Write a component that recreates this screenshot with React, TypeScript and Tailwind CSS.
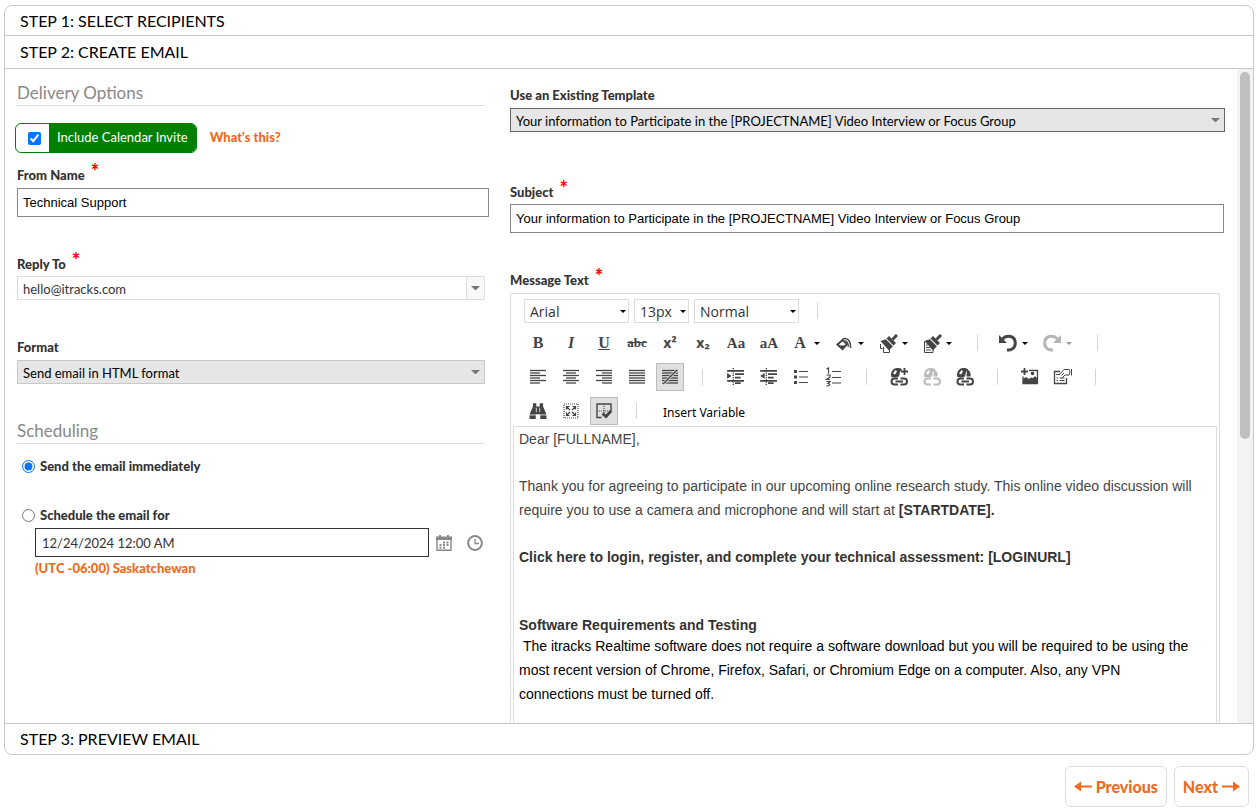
import { useState } from 'react';
import type { ReactNode } from 'react';

const LATO = 'font-[Lato,sans-serif]';
const ARIAL = "font-['Liberation_Sans',Arial,sans-serif]";
const SERIF = "font-['Liberation_Serif',serif]";

const SUBJECT = 'Your information to Participate in the [PROJECTNAME] Video Interview or Focus Group';

function Required() {
  return <span className="relative -top-1 ml-1.5 text-xl leading-none font-black text-[#ff0000]">*</span>;
}

function FieldLabel({ htmlFor, required, children }: { htmlFor: string; required?: boolean; children: ReactNode }) {
  return (
    <label htmlFor={htmlFor} className="flex h-5 items-center text-[13px] leading-5 font-black text-[#333]">
      {children}
      {required && <Required />}
    </label>
  );
}

function Caret({ className = '' }: { className?: string }) {
  return (
    <svg viewBox="0 0 10 5" className={className} aria-hidden="true">
      <path d="M0 0h10L5 5z" fill="currentColor" />
    </svg>
  );
}

// Grey drop-down used by the template, reply-to and format fields
function SelectBox({ id, value, tone }: { id: string; value: string; tone: 'plain' | 'grey' | 'dark' }) {
  const tones = {
    plain: 'border-[#ddd] bg-white text-[#333]',
    grey: 'border-[#c9c9c9] bg-[#e6e6e6] text-black',
    dark: 'border-[#666] bg-[#e6e6e6] text-black',
  };
  return (
    <div className="relative">
      <select id={id} className={`block h-6 w-full appearance-none rounded-none border px-[5px] pt-px text-[13px] leading-5 outline-none ${tones[tone]}`}>
        <option>{value}</option>
      </select>
      <span
        className={`pointer-events-none absolute inset-y-px right-px flex w-[18px] items-center justify-center ${
          tone === 'plain' ? 'border-l border-[#ddd] bg-[#f8f8f8]' : ''
        }`}
      >
        <Caret className="w-[9px] text-[#777]" />
      </span>
    </div>
  );
}

function ToolSelect({ label, value, className }: { label: string; value: string; className: string }) {
  return (
    <div className={`relative ${className}`}>
      <select
        aria-label={label}
        className="block h-6 w-full appearance-none border border-[#ddd] bg-white px-[5px] pt-px font-['Open_Sans',sans-serif] text-sm leading-5 text-[#333] outline-none"
      >
        <option>{value}</option>
      </select>
      <Caret className="pointer-events-none absolute top-[11px] right-[3px] w-[6px] text-black" />
    </div>
  );
}

function Tool({ label, active, children }: { label: string; active?: boolean; children: ReactNode }) {
  return (
    <button
      type="button"
      title={label}
      aria-label={label}
      className={`flex size-7 shrink-0 items-center justify-center text-[#444] ${
        active ? 'border border-[#bbb] bg-[#e0e0e0]' : ''
      }`}
    >
      {children}
    </button>
  );
}

function SplitTool({ label, disabled, children }: { label: string; disabled?: boolean; children: ReactNode }) {
  return (
    <button
      type="button"
      title={label}
      aria-label={label}
      disabled={disabled}
      className={`flex h-7 w-[39px] shrink-0 items-center ${disabled ? 'text-[#b5b5b5]' : 'text-[#444]'}`}
    >
      <span className="flex w-6 items-center justify-center">{children}</span>
      <Caret className={`ml-[2px] w-[6px] ${disabled ? 'text-[#999]' : 'text-black'}`} />
    </button>
  );
}

function Divider() {
  return (
    <span className="flex w-[27px] shrink-0 justify-center">
      <span className="h-4 w-px bg-[#d5d5d5]" />
    </span>
  );
}

function Icon({ size = 'size-4', children }: { size?: string; children: ReactNode }) {
  return (
    <svg viewBox="0 0 16 16" className={size} fill="none" stroke="currentColor" strokeWidth="1.2" aria-hidden="true">
      {children}
    </svg>
  );
}

const ROWS = [1.5, 4, 6.5, 9, 11.5, 14];

function AlignIcon({ align }: { align: 'left' | 'center' | 'right' | 'full' | 'none' }) {
  return (
    <Icon>
      {ROWS.map((y, i) => {
        const short = i % 2 === 1 && align !== 'full' && align !== 'none';
        const start = !short || align === 'left' ? 0 : align === 'center' ? 3 : 6;
        return <path key={y} d={`M${start} ${y}h${short ? 10 : 16}`} strokeWidth="1.3" />;
      })}
      {align === 'none' && (
        <>
          <path d="M1 15 15 1" stroke="#e0e0e0" strokeWidth="3" />
          <path d="M1 15 15 1" strokeWidth="1.4" />
        </>
      )}
    </Icon>
  );
}

function IndentIcon({ outdent }: { outdent?: boolean }) {
  return (
    <Icon size="size-[18px]">
      <path d="M1 2.500h15M8 5.500h8M8 8.500h5M1 11.500h15M8 13.500h5" strokeWidth="1.500" />
      <path d="M6.500 0v16" strokeDasharray="1 1" />
      <path d={outdent ? 'M5 4.500v5L1 7z' : 'M1 4.500v5L5 7z'} fill="currentColor" stroke="none" />
    </Icon>
  );
}

function LinkIcon({ plus, broken }: { plus?: boolean; broken?: boolean }) {
  return (
    <svg viewBox="0 0 18 18" className="size-[18px]" fill="none" stroke="currentColor" aria-hidden="true">
      <path d="M1.500 9a6.500 6.500 0 0 1 6.500-9c2 0 3 .5 4 1.500L10 4l-1 4.500-4 1z" fill="currentColor" stroke="none" />
      <path d="M3 5.500 5.500 2l1.500 1.500-2 3z" fill="#fff" stroke="none" />
      {plus ? (
        <path d="M14.500 0v7M11 3.500h7" strokeWidth="1.800" />
      ) : (
        <path d="M11 1.500c3 1 4 4 3.500 7L10.500 8.500z" fill="currentColor" stroke="none" />
      )}
      <path d="M8 10.500H4.500a3 3 0 0 0 0 6H8M10.500 10.500H14a3 3 0 0 1 0 6h-3.500" strokeWidth="2" />
      {!broken && <path d="M5.500 13.500h7.500" strokeWidth="2" />}
    </svg>
  );
}

function BrushIcon({ page }: { page?: boolean }) {
  return (
    <svg viewBox="0 0 19 19" className="size-[19px] shrink-0" fill="none" stroke="currentColor" aria-hidden="true">
      {page ? (
        <path d="M3 7.500H1.500v11h8.500V15M3 11h2M3 13.500h4M3 16h5" />
      ) : (
        <path d="M1.500 10v4.500h2M4.500 13v5.500h6V15" />
      )}
      <path d="M18 1 13.500 5.500" strokeWidth="3" />
      <path d="M10 2 17 9l-2.500 2.500-7-7z" fill="currentColor" stroke="none" />
      <path d="M6.800 5.200 13.800 12.200 10 16.500 1.500 7z" fill="currentColor" stroke="none" />
    </svg>
  );
}

function UndoIcon({ redo }: { redo?: boolean }) {
  return (
    <svg viewBox="0 0 18 18" className="size-[18px] shrink-0" fill="none" stroke="currentColor" aria-hidden="true">
      <g transform={redo ? 'matrix(-1 0 0 1 18 0)' : undefined}>
        <path d="M3.500 5C8 0 16.300 2 16.300 9c0 5-4 7.800-8.300 6.700" strokeWidth="3" />
        <path d="M0 1v8h8z" fill="currentColor" stroke="none" />
      </g>
    </svg>
  );
}

function Toolbar() {
  return (
    <div className="flex flex-col gap-[6px] px-[13px] pt-[5px]">
      <div className="flex h-6 items-center gap-[5px]">
        <ToolSelect label="Font family" value="Arial" className="w-[105px]" />
        <ToolSelect label="Font size" value="13px" className="w-[55px]" />
        <ToolSelect label="Paragraph style" value="Normal" className="w-[105px]" />
        <Divider />
      </div>

      <div className="flex h-7 items-center gap-[5px]">
        <Tool label="Bold"><span className={`${SERIF} text-base font-bold`}>B</span></Tool>
        <Tool label="Italic"><span className={`${SERIF} text-base font-bold italic`}>I</span></Tool>
        <Tool label="Underline"><span className={`${SERIF} text-base font-bold underline`}>U</span></Tool>
        <Tool label="Strikethrough"><span className={`${SERIF} text-[13px] font-bold line-through`}>abc</span></Tool>
        <Tool label="Superscript">
          <span className="font-['Open_Sans',sans-serif] text-sm font-bold">x²</span>
        </Tool>
        <Tool label="Subscript">
          <span className="font-['Open_Sans',sans-serif] text-sm font-bold">x₂</span>
        </Tool>
        <Tool label="Capitalize"><span className={`${SERIF} text-[15px] font-bold`}>Aa</span></Tool>
        <Tool label="Uppercase"><span className={`${SERIF} text-[15px] font-bold`}>aA</span></Tool>
        <SplitTool label="Font color"><span className={`${SERIF} text-base font-bold`}>A</span></SplitTool>
        <SplitTool label="Background color">
          <Icon>
            <path d="M1.500 9.500 6.500 5l4.500 4-4.500 5z" fill="#fff" strokeWidth="2" />
            <path d="M3 10.500h7L6.500 14z" fill="currentColor" stroke="none" />
            <path d="M6.500 4C11 2.500 15 5 14.500 13" strokeWidth="1.500" />
            <path d="M9 5.500c2.500 1 3.500 3 3.200 6.500" />
          </Icon>
        </SplitTool>
        <SplitTool label="Format painter"><BrushIcon /></SplitTool>
        <SplitTool label="Format stripper"><BrushIcon page /></SplitTool>
        <Divider />
        <SplitTool label="Undo"><UndoIcon /></SplitTool>
        <SplitTool label="Redo" disabled><UndoIcon redo /></SplitTool>
        <Divider />
      </div>

      <div className="flex h-7 items-center gap-[5px]">
        <Tool label="Align left"><AlignIcon align="left" /></Tool>
        <Tool label="Align center"><AlignIcon align="center" /></Tool>
        <Tool label="Align right"><AlignIcon align="right" /></Tool>
        <Tool label="Justify"><AlignIcon align="full" /></Tool>
        <Tool label="Remove alignment" active><AlignIcon align="none" /></Tool>
        <Divider />
        <Tool label="Indent"><IndentIcon /></Tool>
        <Tool label="Outdent"><IndentIcon outdent /></Tool>
        <Tool label="Bullet list">
          <Icon>
            <path d="M6 2.500h9M6 8h9M6 13.500h9" />
            <path d="M1 2.500h3M1 8h3M1 13.500h3" strokeWidth="3" />
          </Icon>
        </Tool>
        <Tool label="Numbered list">
          <svg viewBox="0 0 18 20" className="h-5 w-[18px]" fill="none" stroke="currentColor" aria-hidden="true">
            <path d="M7 4.500h9M7 10.500h9M7 16h9" strokeWidth="1.200" />
            <path d="M1.500 2 3.500 1v5.500M1.500 8H5v2L1.500 12.500H5M1.500 14.500H5L3 16.500c3 0 2 2.500-1.500 2.500" strokeWidth="1.200" />
          </svg>
        </Tool>
        <Divider />
        <Tool label="Insert link"><LinkIcon plus /></Tool>
        <Tool label="Remove link"><span className="text-[#bbb]"><LinkIcon broken /></span></Tool>
        <Tool label="Link manager"><LinkIcon /></Tool>
        <Divider />
        <Tool label="Insert image">
          <svg viewBox="0 0 18 18" className="size-[18px]" fill="none" stroke="currentColor" aria-hidden="true">
            <path d="M3.500 0v7M0 3.500h7" strokeWidth="1.800" />
            <path d="M8 2.500h8.500v13H2V8.500" strokeWidth="1.300" />
            <circle cx="11.500" cy="5.500" r="1.800" fill="currentColor" stroke="none" />
            <path d="M2 16v-5l3-2 3 2 2-1.500 2 .5 2-2 2.500 2.500V16z" fill="currentColor" stroke="none" />
          </svg>
        </Tool>
        <Tool label="Properties">
          <svg viewBox="0 0 20 18" className="h-[18px] w-5" fill="none" stroke="currentColor" aria-hidden="true">
            <path d="M7 3.500H1.500v12h12V10" strokeWidth="1.300" />
            <path d="M3 6.500h4M3.500 10h1.500M3.500 12.500h1.500M6.500 10h5M6.500 12.500h5" strokeWidth="1.200" />
            <path d="M6 6.500 9 4l2-2.500h5l1 2-1 3.500h-4l-3 3M8.500 7.500 11 5M18.500 1v6.500" />
          </svg>
        </Tool>
        <Divider />
      </div>

      <div className="flex h-7 items-center gap-[5px]">
        <Tool label="Find and replace">
          <Icon size="size-[18px]">
            <path d="M3.500 1h3v3h3V1h3v3l3 7v4h-5.500v-4H6v4H.5v-4l3-7z" fill="currentColor" stroke="none" />
            <path d="M0 11.500h16" stroke="#fff" strokeWidth=".7" />
            <path d="M6.500 5v4M9.500 5v4" stroke="#fff" strokeWidth=".7" />
          </Icon>
        </Tool>
        <Tool label="Full screen">
          <Icon>
            <path d="M1 1h14v14H1z" strokeDasharray="1 1" />
            <path d="M3.500 6.500v-3h3M9.500 3.500h3v3M12.500 9.500v3h-3M6.500 12.500h-3v-3M4 4l3 3M12 4 9 7M12 12 9 9M4 12l3-3" />
          </Icon>
        </Tool>
        <Tool label="Show borders" active>
          <Icon>
            <path d="M5.500 14.500H1V1h14v8" strokeWidth="1.400" />
            <path d="M8 1v12M1 8h14" strokeDasharray="1 1" />
            <path d="m6.500 10.500 3.500 3 5-5.500" strokeWidth="2.800" />
          </Icon>
        </Tool>
        <Divider />
        <button type="button" className="ml-2 pt-1 font-['Noto_Sans',sans-serif] text-xs text-black">
          Insert Variable
        </button>
      </div>
    </div>
  );
}

function MessageBody() {
  return (
    <div className={`mx-[2px] mt-px grow border border-b-0 border-[#ddd] pr-5 pl-[5px] text-sm leading-6 text-[#444] ${ARIAL}`}>
      <p>Dear [FULLNAME],</p>
      <p className="mt-[23px]">
        Thank you for agreeing to participate in our upcoming online research study. This online video discussion will
        require you to use a camera and microphone and will start at <b className="text-[#333]">[STARTDATE].</b>
      </p>
      <p className="mt-[23px] font-bold text-[#333]">
        Click here to login, register, and complete your technical assessment: [LOGINURL]
      </p>
      <p className="mt-[46px] leading-5 font-bold text-[#333]">Software Requirements and Testing</p>
      <p className="-mt-px text-black">
        &nbsp;The itracks Realtime software does not require a software download but you will be required to be using
        the most recent version of Chrome, Firefox, Safari, or Chromium Edge on a computer. Also, any VPN connections
        must be turned off.
      </p>
    </div>
  );
}

function DeliveryColumn() {
  const [invite, setInvite] = useState(true);
  const [when, setWhen] = useState('now');

  return (
    <div>
      <h2 className="mt-3 border-b border-[#ddd] text-[17px] leading-6 text-[#888]">Delivery Options</h2>

      <div className="mt-[17px] -ml-[2px] flex items-center gap-[13px]">
        <label className="flex h-[30px] items-stretch overflow-hidden rounded-md border border-[#008000] text-[13px] text-white">
          <span className="flex w-[33px] items-center justify-center pl-[3px]">
            <input
              type="checkbox"
              checked={invite}
              onChange={(e) => setInvite(e.target.checked)}
              className="size-[13px]"
            />
          </span>
          <span className="flex items-center bg-[#008000] px-2">Include Calendar Invite</span>
        </label>
        <a href="#whats-this" className="text-[13px] font-black text-[#f26a21]">What's this?</a>
      </div>

      <div className="mt-3">
        <FieldLabel htmlFor="fromName" required>From Name</FieldLabel>
        <div className="mt-[3px] -mr-1">
          <input
            id="fromName"
            type="text"
            defaultValue="Technical Support"
            className={`block h-[29px] w-full border border-[#888] px-[5px] text-[13px] text-black outline-none ${ARIAL}`}
          />
        </div>
      </div>

      <div className="mt-[37px]">
        <FieldLabel htmlFor="replyTo" required>Reply To</FieldLabel>
        <div className="mt-[2px]"><SelectBox id="replyTo" value="hello@itracks.com" tone="plain" /></div>
      </div>

      <div className="mt-[37px]">
        <FieldLabel htmlFor="format">Format</FieldLabel>
        <div className="mt-[3px]"><SelectBox id="format" value="Send email in HTML format" tone="grey" /></div>
      </div>

      <h2 className="mt-[35px] border-b border-[#ddd] text-[17px] leading-6 text-[#888]">Scheduling</h2>

      <label className="mt-3 flex items-center gap-[5px] pl-[5px] text-[13px] leading-5 font-black text-[#333]">
        <input type="radio" name="when" checked={when === 'now'} onChange={() => setWhen('now')} className="size-[13px]" />
        Send the email immediately
      </label>
      <label className="mt-[29px] flex items-center gap-[5px] pl-[5px] text-[13px] leading-5 font-black text-[#333]">
        <input type="radio" name="when" checked={when === 'later'} onChange={() => setWhen('later')} className="size-[13px]" />
        Schedule the email for
      </label>

      <div className="mt-[3px] mr-[2px] ml-[18px] flex items-center">
        <input
          type="text"
          aria-label="Schedule date"
          defaultValue="12/24/2024 12:00 AM"
          className="h-[29px] min-w-0 grow border border-[#333] px-[6px] text-[13px] text-[#333] outline-none"
        />
        <button type="button" aria-label="Open calendar" className="ml-[7px] text-[#888]">
          <Icon>
            <path d="M1 3h14v12.300H1z" strokeWidth="1.400" />
            <path d="M4 0v3M12 0v3" strokeWidth="1.800" />
            <path d="M0 1.500h16v3.500H0z" fill="currentColor" stroke="none" />
            <path d="M7 7.500h2M10.500 7.500h2M3.500 10h2M7 10h2M10.500 10h2M3.500 12.700h2M7 12.700h2" strokeWidth="1.900" />
          </Icon>
        </button>
        <button type="button" aria-label="Open time picker" className="ml-[15px] text-[#888]">
          <Icon>
            <circle cx="8" cy="8" r="6.900" strokeWidth="2" />
            <path d="M8 4v4.500h4" strokeWidth="1.300" />
          </Icon>
        </button>
      </div>
      <p className="mt-px ml-[18px] text-[13px] leading-5 font-black text-[#f26a21]">(UTC -06:00) Saskatchewan</p>
    </div>
  );
}

function MessageColumn() {
  return (
    <div className="flex min-w-0 flex-col">
      <div className="mt-4">
        <FieldLabel htmlFor="template">Use an Existing Template</FieldLabel>
        <div className="mt-[3px]"><SelectBox id="template" value={SUBJECT} tone="dark" /></div>
      </div>

      <div className="mt-[50px]">
        <FieldLabel htmlFor="subject" required>Subject</FieldLabel>
        <div className="mt-[2px] mr-px">
          <input
            id="subject"
            type="text"
            defaultValue={SUBJECT}
            className={`block h-[29px] w-full border border-[#888] px-[5px] text-[13px] text-black outline-none ${ARIAL}`}
          />
        </div>
      </div>

      <div className="mt-[37px] flex h-5 items-center text-[13px] leading-5 font-black text-[#333]">
        Message Text
        <Required />
      </div>
      <div className="mt-[3px] mr-[5px] flex grow flex-col border border-b-0 border-[#ddd]">
        <Toolbar />
        <MessageBody />
      </div>
    </div>
  );
}

export default function App() {
  return (
    <div className={`flex h-screen flex-col bg-white px-1 py-[5px] text-black ${LATO}`}>
      {/* Wizard steps */}
      <div className="mr-[-1px] flex min-h-0 grow flex-col overflow-hidden rounded-lg border border-[#c8c8c8]">
        <button type="button" className="h-[30px] shrink-0 border-b border-[#c8c8c8] pl-[15px] text-left text-base">
          STEP 1: SELECT RECIPIENTS
        </button>
        <button type="button" className="h-[33px] shrink-0 border-b border-[#c8c8c8] pl-[15px] text-left text-base">
          STEP 2: CREATE EMAIL
        </button>

        <div className="flex min-h-0 grow overflow-hidden">
          <div className="grid min-w-0 grow grid-cols-[468fr_715fr] gap-x-[25px] px-3">
            <DeliveryColumn />
            <MessageColumn />
          </div>
          {/* Scroll track */}
          <div className="w-4 shrink-0 bg-[#f3f3f3] px-[3px] pt-[3px]">
            <div className="h-[367px] rounded-full bg-[#bfbfbf]" />
          </div>
        </div>

        <button type="button" className="h-[31px] shrink-0 border-t border-[#c8c8c8] pl-[15px] text-left text-base">
          STEP 3: PREVIEW EMAIL
        </button>
      </div>

      {/* Footer navigation */}
      <div className="mt-[11px] mr-1 flex shrink-0 justify-end gap-[7px] text-base font-black text-[#f26a21]">
        <button type="button" className="flex h-[41px] items-center gap-1 rounded-md border border-[#ddd] px-2">
          <svg viewBox="0 0 18 12" className="h-3 w-[18px]" fill="currentColor" aria-hidden="true">
            <path d="M0 5.500 7 .5v3.900h11v2.200H7v3.900z" />
          </svg>
          Previous
        </button>
        <button type="button" className="flex h-[41px] items-center gap-1 rounded-md border border-[#ddd] px-2">
          Next
          <svg viewBox="0 0 18 12" className="h-3 w-[18px]" fill="currentColor" aria-hidden="true">
            <path d="M18 5.500 11 .5v3.900H0v2.200h11v3.900z" />
          </svg>
        </button>
      </div>
    </div>
  );
}
